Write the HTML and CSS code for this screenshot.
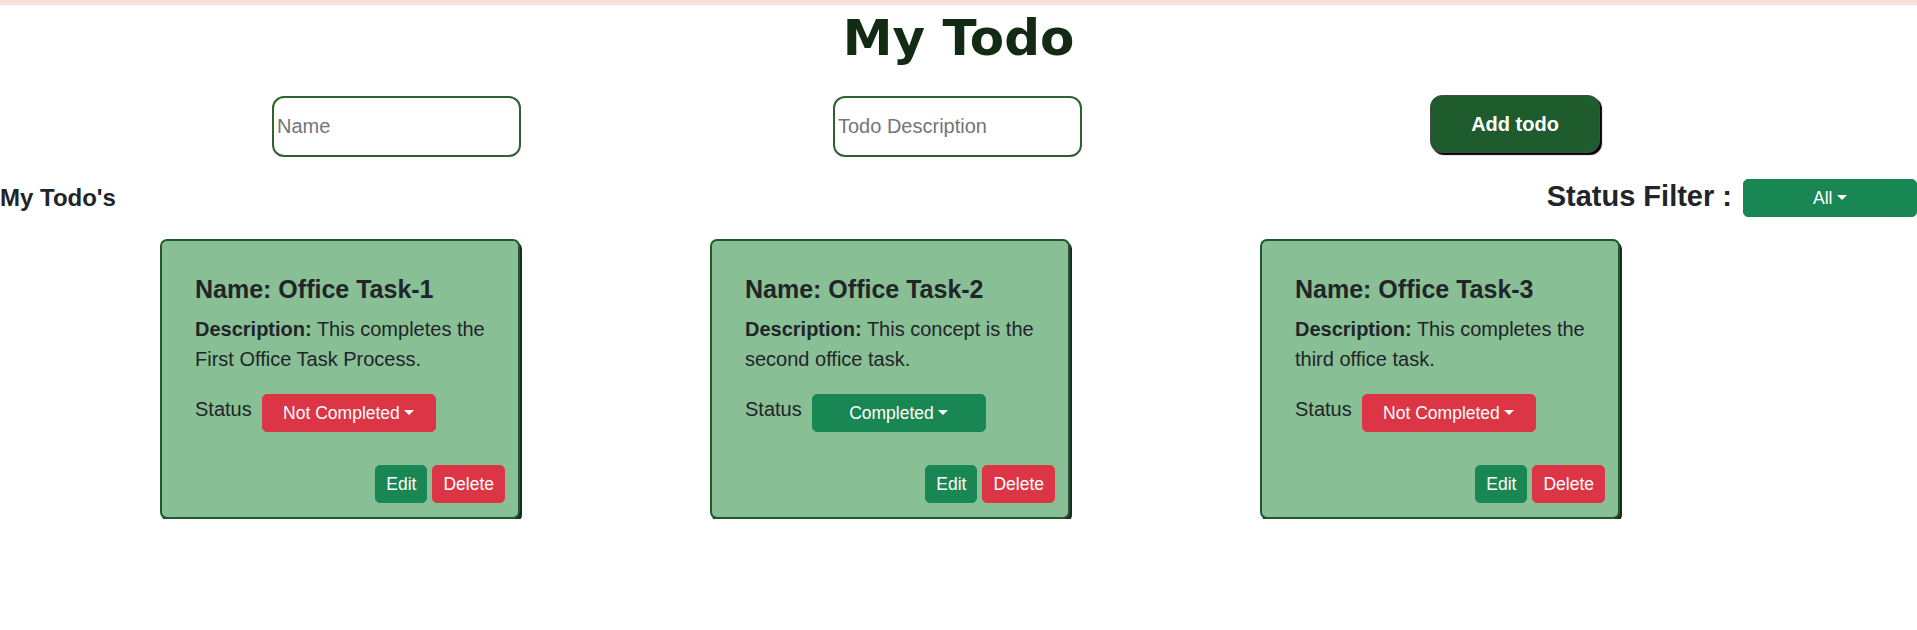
FILE: index.html
```html
<!DOCTYPE html>
<html lang="en">
<head>
<meta charset="utf-8">
<title>My Todo</title>
<link rel="stylesheet" href="styles.css">
</head>
<body>
<div class="topbar"></div>
<h1 class="title">My Todo</h1>
<div class="form-row">
  <input class="field field-name" type="text" placeholder="Name">
  <input class="field field-desc" type="text" placeholder="Todo Description">
  <button class="add-btn" type="button">Add todo</button>
</div>
<div class="list-header">
  <h4 class="list-title">My Todo's</h4>
  <div class="filter">
    <span class="filter-label">Status Filter :</span>
    <button class="btn btn-success btn-status filter-btn dropdown" type="button">All</button>
  </div>
</div>
<div class="cards">
  <div class="card">
    <h5 class="card-title">Name: Office Task-1</h5>
    <p class="card-desc"><b>Description:</b> This completes the First Office Task Process.</p>
    <div class="status-row">
      <span class="status-label">Status</span>
      <button class="btn btn-danger btn-status dropdown" type="button">Not Completed</button>
    </div>
    <div class="actions">
      <button class="btn btn-success" type="button">Edit</button>
      <button class="btn btn-danger" type="button">Delete</button>
    </div>
  </div>
  <div class="card">
    <h5 class="card-title">Name: Office Task-2</h5>
    <p class="card-desc"><b>Description:</b> This concept is the second office task.</p>
    <div class="status-row">
      <span class="status-label">Status</span>
      <button class="btn btn-success btn-status dropdown" type="button">Completed</button>
    </div>
    <div class="actions">
      <button class="btn btn-success" type="button">Edit</button>
      <button class="btn btn-danger" type="button">Delete</button>
    </div>
  </div>
  <div class="card">
    <h5 class="card-title">Name: Office Task-3</h5>
    <p class="card-desc"><b>Description:</b> This completes the third office task.</p>
    <div class="status-row">
      <span class="status-label">Status</span>
      <button class="btn btn-danger btn-status dropdown" type="button">Not Completed</button>
    </div>
    <div class="actions">
      <button class="btn btn-success" type="button">Edit</button>
      <button class="btn btn-danger" type="button">Delete</button>
    </div>
  </div>
</div>
</body>
</html>
```
FILE: styles.css
```css
* { box-sizing: border-box; }

body {
  margin: 0;
  background: #ffffff;
  color: #212529;
  font-family: "Liberation Sans", Arial, sans-serif;
  font-size: 20px;
  line-height: 30px;
}

.topbar {
  height: 5px;
  background: #f6e1da;
}

.title {
  margin: 4px 0 0;
  text-align: center;
  font-family: "DejaVu Sans", Verdana, sans-serif;
  font-weight: 700;
  font-size: 50px;
  line-height: 58px;
  color: #132b13;
}

.form-row {
  display: flex;
  align-items: flex-start;
  margin-top: 29px;
}

.field {
  width: 249px;
  height: 61px;
  border: 2px solid #2f6230;
  border-radius: 12px;
  padding: 0 3px;
  font-family: "Liberation Sans", Arial, sans-serif;
  font-size: 20px;
  color: #212529;
  background: #fff;
  outline: none;
}
.field::placeholder { color: #757575; }

.field-name { margin-left: 272px; }
.field-desc { margin-left: 312px; }

.add-btn {
  margin-left: 348px;
  margin-top: -1px;
  width: 170px;
  height: 58px;
  border: 1px solid #4a4a4a;
  border-radius: 12px;
  background: #1e5c2e;
  color: #ffffff;
  font-family: "Liberation Sans", Arial, sans-serif;
  font-weight: 700;
  font-size: 20px;
  box-shadow: 2px 2px 1px #000;
}

.list-header {
  display: flex;
  justify-content: space-between;
  align-items: flex-start;
  margin-top: 22px;
}

.list-title {
  margin: 4px 0 0;
  font-size: 24px;
  line-height: 29px;
  font-weight: 700;
}

.filter {
  display: flex;
  align-items: flex-start;
}

.filter-label {
  font-size: 29px;
  line-height: 35px;
  font-weight: 700;
}

.filter-btn { margin-left: 11px; }

.btn {
  display: inline-block;
  padding: 5px 10px;
  border: 1px solid transparent;
  border-radius: 5px;
  font-family: "Liberation Sans", Arial, sans-serif;
  font-size: 17.5px;
  line-height: 26px;
  color: #fff;
  text-align: center;
  white-space: nowrap;
}

.btn-success { background: #198754; border-color: #198754; }
.btn-danger { background: #dc3545; border-color: #dc3545; }

.btn-status { width: 174px; }

.dropdown::after {
  content: "";
  display: inline-block;
  margin-left: 0.255em;
  vertical-align: 0.255em;
  border-top: 0.3em solid;
  border-right: 0.3em solid transparent;
  border-left: 0.3em solid transparent;
  border-bottom: 0;
}

.cards {
  display: flex;
  gap: 190px;
  padding-left: 160px;
  margin-top: 22px;
}

.card {
  width: 360px;
  background: #89bf95;
  border: 2px solid #1f5a2f;
  border-radius: 7px;
  box-shadow: 2px 3px 0 #1d2a21;
  padding: 33px 13px 14px 33px;
}

.card-title {
  margin: 0 0 10px;
  font-size: 25px;
  line-height: 30px;
  font-weight: 700;
}

.card-desc {
  margin: 0 0 20px;
}

.status-row {
  display: flex;
  align-items: flex-start;
}

.status-label { margin-right: 10px; }

.actions {
  display: flex;
  justify-content: flex-end;
  gap: 5px;
  margin-top: 33px;
}
```
